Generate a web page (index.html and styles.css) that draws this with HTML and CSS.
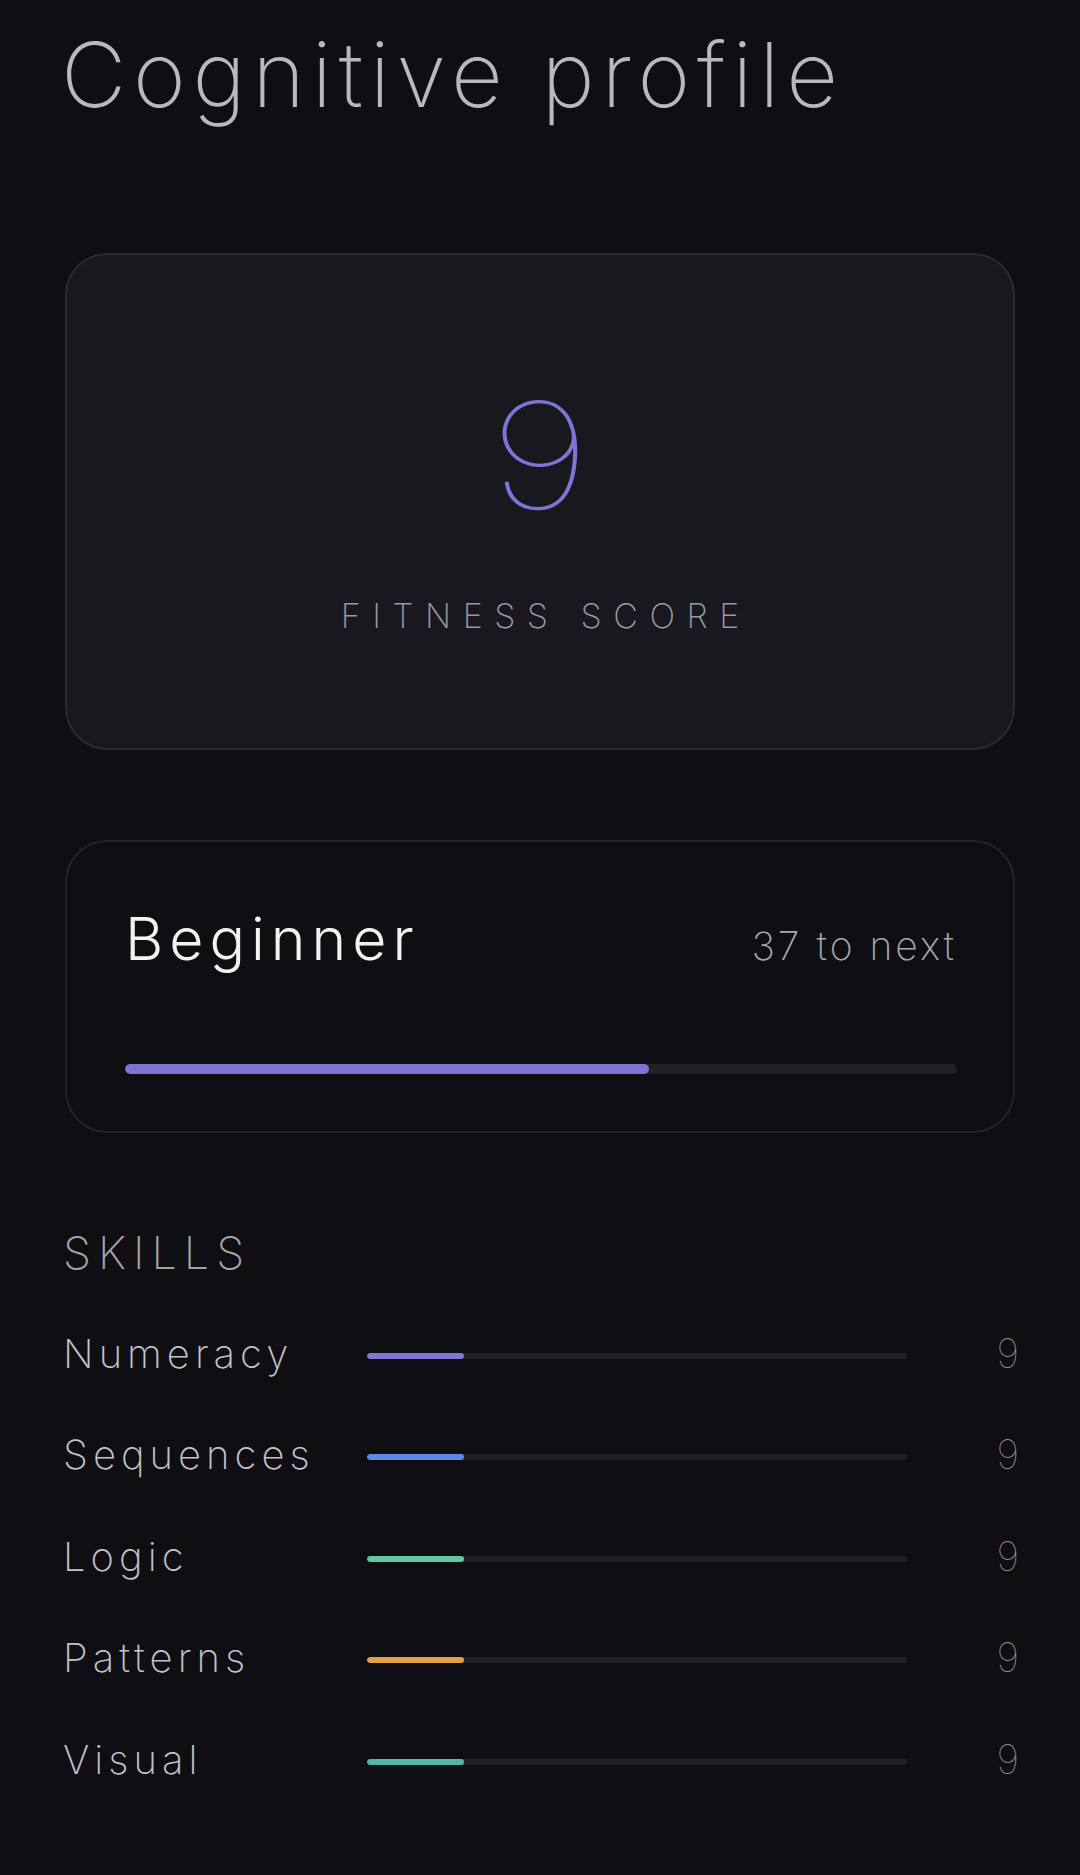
FILE: index.html
```html
<!DOCTYPE html>
<html lang="en">

<head>
  <meta charset="UTF-8">
  <meta name="viewport" content="width=device-width, initial-scale=1.0">
  <title>Cognitive profile</title>
  <link rel="stylesheet" href="styles.css">
</head>

<body>
  <h1>Cognitive profile</h1>

  <div class="score-card">
    <div class="score">9</div>
    <div class="score-label">Fitness score</div>
  </div>

  <div class="level-card">
    <div class="level-head">
      <span class="level-name">Beginner</span>
      <span class="level-next">37 to next</span>
    </div>
    <div class="track">
      <div class="fill" style="width: 63%;"></div>
    </div>
  </div>

  <h2>Skills</h2>
  <div class="skills">
    <div class="skill">
      <span class="skill-name">Numeracy</span>
      <div class="track thin"><div class="fill numeracy" style="width: 18%;"></div></div>
      <span class="skill-value">9</span>
    </div>
    <div class="skill">
      <span class="skill-name">Sequences</span>
      <div class="track thin"><div class="fill sequences" style="width: 18%;"></div></div>
      <span class="skill-value">9</span>
    </div>
    <div class="skill">
      <span class="skill-name">Logic</span>
      <div class="track thin"><div class="fill logic" style="width: 18%;"></div></div>
      <span class="skill-value">9</span>
    </div>
    <div class="skill">
      <span class="skill-name">Patterns</span>
      <div class="track thin"><div class="fill patterns" style="width: 18%;"></div></div>
      <span class="skill-value">9</span>
    </div>
    <div class="skill">
      <span class="skill-name">Visual</span>
      <div class="track thin"><div class="fill visual" style="width: 18%;"></div></div>
      <span class="skill-value">9</span>
    </div>
  </div>
</body>

</html>
```
FILE: styles.css
```css
:root {
  --bg-color: #0f0f13;
  --card-bg: #18181e;
  --card-border: #2a2a31;
  --track: #202026;
  --accent: #7d75d5;
  --muted: #9a9aa2;
}

body {
  font-family: Inter, "Noto Sans", sans-serif;
  font-weight: 200;
  background-color: var(--bg-color);
  color: #bdbdc5;
  margin: 0;
  padding: 21px 65px 60px;
}

h1 {
  font-size: 90px;
  font-weight: 200;
  line-height: 1.2;
  letter-spacing: 6.7px;
  color: #b8b8c0;
  margin: 0 0 124px -4px;
  white-space: nowrap;
}

.score-card {
  background-color: var(--card-bg);
  border: 2px solid var(--card-border);
  border-radius: 42px;
  padding: 127px 0 115px;
  display: flex;
  flex-direction: column;
  align-items: center;
}

.score {
  font-size: 148px;
  font-weight: 100;
  line-height: 1;
  color: var(--accent);
  margin-bottom: 69px;
  transform: scaleX(1.2);
}

.score-label {
  font-size: 34px;
  line-height: 1;
  text-transform: uppercase;
  letter-spacing: 11.5px;
  padding-left: 11.5px;
  color: var(--muted);
}

.level-card {
  margin-top: 90px;
  border: 2px solid #24242a;
  border-radius: 42px;
  padding: 62px 56px 57px 58px;
}

.level-head {
  display: flex;
  justify-content: space-between;
  align-items: baseline;
  margin-bottom: 89px;
}

.level-name {
  font-size: 59px;
  font-weight: 300;
  line-height: 1.2;
  letter-spacing: 6px;
  color: #f2f2f5;
}

.level-next {
  font-size: 39px;
  line-height: 1.2;
  letter-spacing: 3px;
  color: #a6a6ae;
}

.track {
  height: 10px;
  border-radius: 5px;
  background-color: var(--track);
  overflow: hidden;
}

.fill {
  height: 100%;
  border-radius: 5px;
  background-color: var(--accent);
}

h2 {
  font-size: 45px;
  font-weight: 200;
  line-height: 1.2;
  text-transform: uppercase;
  letter-spacing: 7px;
  color: #a2a2aa;
  margin: 93px 0 50px -2px;
}

.skills {
  display: flex;
  flex-direction: column;
  gap: 53.5px;
  margin-right: -4px;
}

.skill {
  display: grid;
  grid-template-columns: 302px 540px 1fr;
  align-items: center;
  height: 48px;
}

.skill-name {
  font-size: 40px;
  line-height: 1.2;
  letter-spacing: 5px;
  color: #c2c2ca;
  margin-left: -2px;
}

.track.thin {
  height: 6px;
  border-radius: 3px;
  margin-top: 4px;
}

.track.thin .fill {
  border-radius: 3px;
}

.skill-value {
  font-size: 40px;
  font-weight: 100;
  line-height: 1.2;
  text-align: right;
  color: #8a8a92;
}

.fill.numeracy { background-color: #7f78d6; }
.fill.sequences { background-color: #5b8ae6; }
.fill.logic { background-color: #62c7a0; }
.fill.patterns { background-color: #e4a043; }
.fill.visual { background-color: #4db8aa; }
```
